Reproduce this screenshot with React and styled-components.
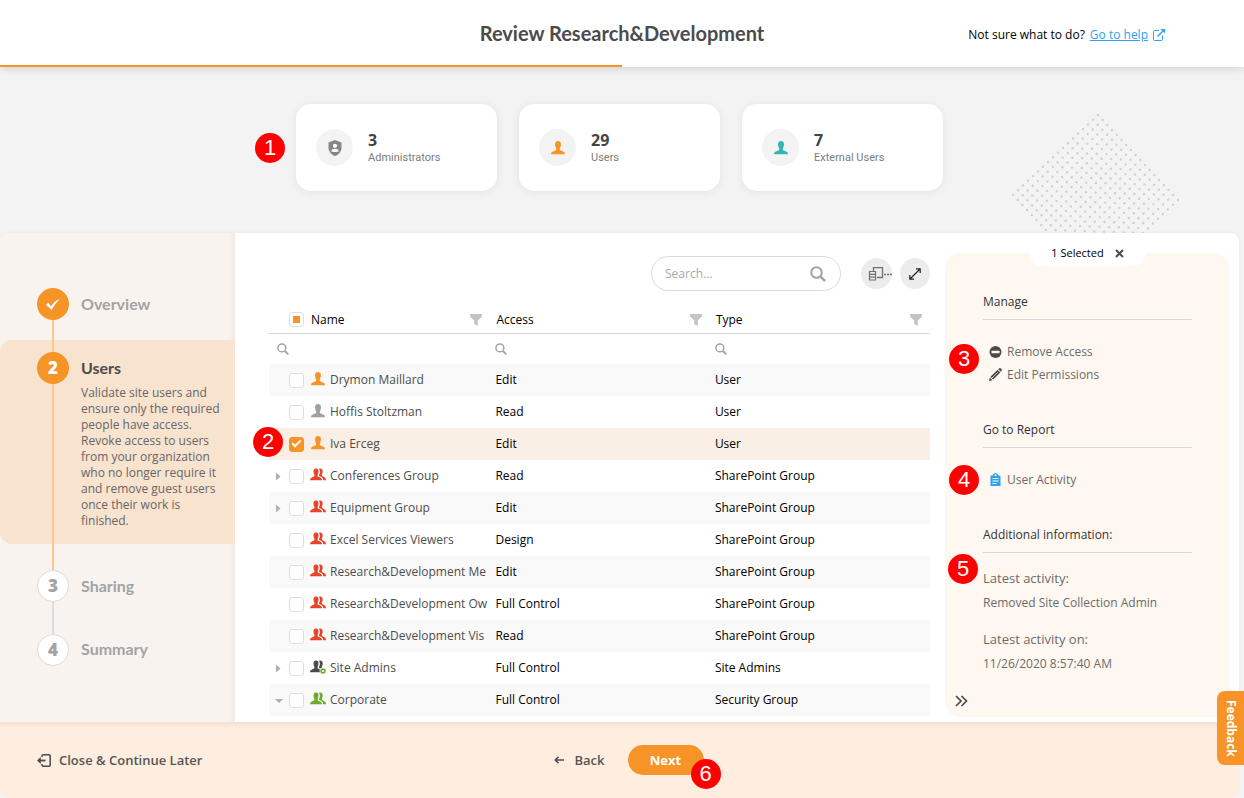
import React, { useState, useRef, useEffect } from "react";
import styled, { createGlobalStyle, css } from "styled-components";

const GlobalStyle = createGlobalStyle`
  *, *::before, *::after { box-sizing: border-box; }
  html, body { margin: 0; padding: 0; }
  body {
    background: #f3f3f3;
    color: #1c1c1c;
    font: 12px/16px "Open Sans", "Noto Sans", sans-serif;
  }
  button, input { font: inherit; color: inherit; }
  button { background: none; border: 0; padding: 0; cursor: pointer; }
  svg { display: block; flex: none; }
`;

const orange = "#f79428";
const heading = `Lato, "Open Sans", sans-serif`;

const Page = styled.div`
  min-height: 100vh;
  display: flex;
  flex-direction: column;
`;

/* Header */

const Header = styled.header`
  position: relative;
  z-index: 2;
  background: #fff;
  box-shadow: 0 2px 8px rgba(0, 0, 0, 0.13);
`;

const HeaderRow = styled.div`
  display: grid;
  grid-template-columns: 1fr auto 1fr;
  align-items: center;
  height: 65px;
`;

const Title = styled.h1`
  grid-column: 2;
  margin: 0;
  font: 700 20px/24px ${heading};
  color: #4b4b4b;
`;

const Help = styled.p`
  display: flex;
  align-items: center;
  justify-content: flex-end;
  gap: 5px;
  margin: 4px 79px 0 0;
  font-weight: 500;
  color: #000;
`;

const HelpLink = styled.a`
  display: flex;
  align-items: center;
  gap: 5px;
  color: #2ea3f2;
  text-decoration: underline;
`;

const ProgressTrack = styled.div`
  height: 2px;
`;

const ProgressFill = styled.div`
  width: 50%;
  height: 100%;
  background: ${orange};
`;

/* Numbered callouts laid over the screen */

const Callout = styled.span`
  position: absolute;
  z-index: 3;
  left: ${(p) => p.$x}px;
  top: ${(p) => p.$y}px;
  width: 30px;
  height: 30px;
  border-radius: 50%;
  background: #f00;
  color: #fff;
  font: 22px/30px "Liberation Sans", Arial, sans-serif;
  text-align: center;
`;

/* Summary cards */

const Content = styled.div`
  flex: 1;
  display: flex;
  flex-direction: column;
  margin-right: 5px;
`;

const Hero = styled.section`
  position: relative;
  display: flex;
  justify-content: center;
  padding: 37px 0 42px;
  overflow: hidden;
`;

const Dots = styled.svg`
  position: absolute;
  right: 59px;
  top: 45px;
`;

const Cards = styled.div`
  position: relative;
  display: flex;
  gap: 22px;
`;

const Card = styled.article`
  display: flex;
  align-items: center;
  gap: 15px;
  width: 201px;
  height: 87px;
  padding: 0 20px;
  border-radius: 15px;
  background: #fff;
  box-shadow: 0 1px 8px rgba(0, 0, 0, 0.07);
`;

const CardIcon = styled.div`
  display: grid;
  place-items: center;
  width: 37px;
  height: 37px;
  border-radius: 50%;
  background: #f3f3f3;
`;

const CardText = styled.div`
  padding-top: 2px;
`;

const CardCount = styled.div`
  font: 700 16px/18px "Open Sans", sans-serif;
  color: #444;
`;

const CardLabel = styled.div`
  font: 11px/18px Roboto, "Open Sans", sans-serif;
  color: #7c7c7c;
`;

/* Workspace */

const Workspace = styled.main`
  display: flex;
  border-radius: 8px 8px 0 0;
  background: #fff;
  box-shadow: 0 0 4px rgba(0, 0, 0, 0.05);
`;

const Sidebar = styled.nav`
  width: 235px;
  padding-top: 55px;
  border-radius: 8px 0 0 0;
  background: #f8f3ef;
  box-shadow: inset -8px 0 8px -8px rgba(0, 0, 0, 0.08);
`;

const StepItem = styled.div`
  display: flex;
  padding-left: 37px;
  border-radius: 12px 0 0 12px;
  background: ${(p) => (p.$active ? "#f8e3cf" : "transparent")};
`;

const Rail = styled.div`
  display: flex;
  flex-direction: column;
  align-items: center;
  width: 32px;
`;

const RailLine = styled.div`
  width: 2px;
  height: ${(p) => p.$h || 0}px;
  flex-grow: ${(p) => (p.$grow ? 1 : 0)};
  background: ${(p) => (p.$done ? "#fcc78c" : "#dcdcdc")};
`;

const StepMark = styled.div`
  display: grid;
  place-items: center;
  width: 32px;
  height: 32px;
  border-radius: 50%;
  font: 800 17px/18px "Open Sans", sans-serif;
  ${(p) =>
    p.$done
      ? css`
          background: ${orange};
          color: #fff;
        `
      : css`
          background: #fff;
          border: 1px solid #dcdcdc;
          color: #a3a3a3;
        `}
`;

const StepBody = styled.div`
  flex: 1;
  margin: ${(p) => p.$top}px 12px ${(p) => p.$bottom}px 12px;
`;

const StepTitle = styled.a`
  display: block;
  font: 700 16px/20px ${heading};
  color: ${(p) => (p.$active ? "#4b4b4b" : "#a3a3a3")};
  text-decoration: none;
`;

const StepText = styled.p`
  margin: 7px 0 0;
  color: #666;
`;

/* User grid */

const GridArea = styled.section`
  flex: 1;
  min-width: 0;
  padding: 23px 15px 6px 34px;
`;

const Toolbar = styled.div`
  display: flex;
  align-items: center;
  justify-content: flex-end;
  height: 35px;
  margin-bottom: 15px;
`;

const SearchBox = styled.label`
  display: flex;
  align-items: center;
  width: 190px;
  height: 35px;
  margin-right: 20px;
  padding: 0 14px 0 13px;
  border: 1px solid #dadada;
  border-radius: 18px;
  color: #a8a8a8;
`;

const SearchInput = styled.input`
  flex: 1;
  min-width: 0;
  border: 0;
  padding: 0;
  outline: 0;
  background: none;
  color: #333;
  &::placeholder {
    color: #a8a8a8;
    opacity: 1;
  }
`;

const RoundButton = styled.button`
  display: flex;
  align-items: center;
  justify-content: ${(p) => (p.$wide ? "flex-end" : "center")};
  width: ${(p) => (p.$wide ? 31 : 30)}px;
  height: 31px;
  margin-left: ${(p) => p.$gap || 0}px;
  border-radius: 50%;
  background: #ececec;
`;

const Table = styled.table`
  width: 100%;
  table-layout: fixed;
  border-collapse: separate;
  border-spacing: 0;
`;

const HeadCell = styled.th`
  height: 28px;
  padding: 0;
  border-bottom: 1px solid #d4d4d4;
  font-weight: 400;
  text-align: left;
  color: #000;
`;

const HeadInner = styled.div`
  display: flex;
  align-items: center;
  padding: 0 ${(p) => p.$right}px 0 ${(p) => p.$left}px;
  gap: 7px;
`;

const FilterButton = styled.button`
  margin-left: auto;
`;

const FilterCell = styled.td`
  height: 30px;
  padding: 0 0 0 ${(p) => p.$left}px;
`;

const Row = styled.tr`
  background: ${(p) => (p.$selected ? "#faefe4" : p.$striped ? "#f9f9f9" : "#fff")};
`;

const Cell = styled.td`
  position: relative;
  height: 32px;
  padding: 0 0 0 ${(p) => p.$left || 0}px;
  color: #000;
`;

const NameInner = styled.div`
  display: flex;
  align-items: center;
  padding-left: 6px;
  white-space: nowrap;
  color: #4d4d4d;
`;

const Caret = styled.button`
  width: 14px;
  height: 15px;
`;

const CaretSpace = styled.span`
  flex: none;
  width: 14px;
`;

const CheckBox = styled.input`
  appearance: none;
  flex: none;
  display: grid;
  place-items: center;
  width: 15px;
  height: 15px;
  margin: 0;
  border: 1px solid #dedede;
  border-radius: 3px;
  background: #fff;
  &:checked {
    border-color: ${orange};
    background: ${orange};
  }
  &:checked::after {
    content: "";
    width: 9px;
    height: 5px;
    margin-top: -3px;
    border: solid #fff;
    border-width: 0 0 2px 2px;
    transform: rotate(-45deg);
  }
  &:indeterminate::after {
    content: "";
    width: 7px;
    height: 7px;
    background: ${orange};
  }
`;

const KindIcon = styled.span`
  flex: none;
  width: 16px;
  margin: 0 4px 2px 6px;
`;

/* Side panel */

const Panel = styled.aside`
  position: relative;
  display: flex;
  flex-direction: column;
  width: 285px;
  margin: 20px 9px 5px 0;
  border-radius: 15px;
  background: #fff8f1;
`;

const PanelTab = styled.div`
  display: flex;
  align-items: center;
  align-self: center;
  gap: 11px;
  height: 26px;
  margin-top: -13px;
  padding: 0 22px;
  border-radius: 0 0 14px 14px;
  background: #fff;
  font-size: 11px;
  color: #000;
`;

const PanelSection = styled.section`
  margin: ${(p) => p.$top}px 38px 0;
`;

const PanelTitle = styled.h2`
  margin: 0 0 ${(p) => p.$gap}px;
  padding-bottom: 7px;
  border-bottom: 1px solid #d8d8d8;
  font: 500 12px/20px "Open Sans", sans-serif;
  color: #333;
`;

const ActionButton = styled.button`
  display: flex;
  align-items: center;
  gap: 5px;
  height: 23px;
  padding-left: 6px;
  color: #6b6b6b;
`;

const Facts = styled.dl`
  margin: 0;
  color: #6b6b6b;
`;

const FactTerm = styled.dt`
  margin-top: ${(p) => p.$top || 0}px;
  font-size: 13px;
`;

const FactValue = styled.dd`
  margin: 9px 0 0;
`;

const CollapseButton = styled.button`
  align-self: flex-start;
  margin: auto 0 10px 10px;
  color: #4b4b4b;
`;

/* Footer */

const Footer = styled.footer`
  position: relative;
  flex: 1;
  display: grid;
  grid-template-columns: 1fr auto 1fr;
  align-items: center;
  min-height: 76px;
  border-radius: 0 0 8px 8px;
  background: #ffeedf;
  box-shadow: inset 0 7px 7px -6px rgba(120, 70, 20, 0.14);
`;

const TextButton = styled.button`
  display: flex;
  align-items: center;
  justify-self: start;
  gap: ${(p) => p.$gap}px;
  padding: 0 ${(p) => p.$pad}px;
  font-size: 13px;
  font-weight: 600;
  color: #555;
`;

const FooterActions = styled.div`
  display: flex;
  align-items: center;
  gap: 4px;
`;

const NextButton = styled.button`
  position: relative;
  width: 76px;
  height: 30px;
  border-radius: 15px;
  background: ${orange};
  color: #fff;
  font-size: 13px;
  font-weight: 700;
`;

const Feedback = styled.button`
  position: fixed;
  z-index: 4;
  right: 0;
  bottom: 33px;
  width: 27px;
  height: 74px;
  border-radius: 8px 0 0 8px;
  background: ${orange};
  color: #fff;
  font-weight: 700;
  writing-mode: vertical-rl;
`;

/* Icons */

const UserIcon = ({ color }) => (
  <svg width="16" height="14" viewBox="0 0 16 14" fill={color}>
    <path d="M8 0C6 0 5 1.500 5 3.500C5 5.500 6 6.800 6.200 7.600V8.600C6.200 9.600 5 9.800 3.500 10.200C1.800 10.700 1 11.600 1 13.300H15C15 11.600 14.200 10.700 12.500 10.200C11 9.800 9.800 9.600 9.800 8.600V7.600C10 6.800 11 5.500 11 3.500C11 1.500 10 0 8 0Z" />
  </svg>
);

const GroupIcon = ({ color, gear }) => (
  <svg width="16" height="14" viewBox="0 0 16 14">
    <path
      fill={color}
      d="M6 .5C4.200.5 3.500 1.700 3.500 3.400C3.500 5 4.200 6 4.400 6.700V7.600C4.400 8.700 3.300 8.900 2 9.400C.6 9.900 0 10.500 0 12.200H12C12 10.500 11.400 9.900 10 9.400C8.700 8.900 7.600 8.700 7.600 7.600V6.700C7.800 6 8.500 5 8.500 3.400C8.500 1.700 7.800.5 6 .5Z"
    />
    <path
      fill={color}
      d="M9 .7C11.300.2 12.700 1.300 12.700 3.500C12.700 5 12.200 5.900 11.900 6.600V7.600C12.600 8.800 14 8.700 15 9.700C15.800 10.400 16 11 16 12.200H13.200C13 9.700 11.500 8.900 9.600 8.300C8.900 8 8.900 7.200 9.200 6.500C10.200 4.800 10.200 2.400 9 .7Z"
    />
    {gear && (
      <>
        <circle cx="13" cy="11" r="3.400" fill="#fff" />
        <circle cx="13" cy="11" r="1.900" fill="none" stroke="#6aab2e" strokeWidth="1.600" />
      </>
    )}
  </svg>
);

const SearchIcon = ({ size }) => (
  <svg width={size} height={size} viewBox="0 0 14 14" fill="none" stroke="#a5a5a5" strokeWidth="1.800">
    <circle cx="5.700" cy="5.700" r="4.600" />
    <path d="M9 9L13.200 13.200" strokeWidth="2.200" />
  </svg>
);

const FunnelIcon = () => (
  <svg width="12" height="12" viewBox="0 0 12 12" fill="#c4c4c4">
    <path d="M0 0H12V2.500L7.800 6.500V12L4.200 10V6.500L0 2.500Z" />
  </svg>
);

const ShieldIcon = () => (
  <svg width="14" height="16" viewBox="0 0 14 16">
    <path fill="#868686" d="M7 0L13.500 2.500V7.500C13.500 11.500 10.800 14.700 7 16C3.200 14.700.5 11.500.5 7.500V2.500Z" />
    <circle cx="7" cy="5.800" r="2.100" fill="#fff" />
    <path fill="#fff" d="M3.200 11.300C3.400 9.400 5.200 8.700 7 8.700S10.600 9.400 10.800 11.300C9.800 12.300 4.200 12.300 3.200 11.300Z" />
  </svg>
);

const ExternalIcon = () => (
  <svg width="12" height="12" viewBox="0 0 12 12" fill="none" stroke="#2ea3f2">
    <path d="M6 1.500H1.500C.9 1.500.5 1.900.5 2.500V10.500C.5 11.100.9 11.500 1.500 11.500H8.500C9.100 11.500 9.500 11.100 9.500 10.500V6.500" />
    <path d="M4.500 7.500L10.500 1.500" strokeWidth="1.500" />
    <path d="M7.500 0H12V4.500Z" fill="#2ea3f2" stroke="none" />
  </svg>
);

const CheckIcon = () => (
  <svg width="16" height="13" viewBox="0 0 16 13" fill="#fff">
    <path d="M1 6.800L3.200 4.800L6 8.200C8 5.200 10.800 2.500 14.800.8C12.200 3.800 9 7.600 6.600 12Z" />
  </svg>
);

const ColumnsIcon = () => (
  <svg width="24" height="14" viewBox="0 0 24 14" fill="none" stroke="#707070">
    <path d="M5.500 4V.5H14.500V10.500H9" strokeWidth="1.300" />
    <path d="M1.500 4.500H7.500V13H1.500ZM1.500 7.300H7.500M1.500 10.200H7.500" strokeWidth="1.200" />
    <path d="M16 7.500H18M19 7.500H21M22 7.500H24" strokeWidth="1.400" />
  </svg>
);

const ExpandIcon = () => (
  <svg width="12" height="12" viewBox="0 0 12 12" fill="none" stroke="#222" strokeWidth="1.200">
    <path d="M1 11L11 1M7 .8H11.200V5M.8 7V11.200H5" />
  </svg>
);

const CloseIcon = () => (
  <svg width="9" height="9" viewBox="0 0 9 9" stroke="#4b4b4b" strokeWidth="2">
    <path d="M1 1L8 8M8 1L1 8" />
  </svg>
);

const RemoveIcon = () => (
  <svg width="13" height="12" viewBox="0 0 13 12">
    <circle cx="6.500" cy="6" r="6" fill="#4b4b4b" />
    <rect x="2.500" y="4.700" width="8" height="2.600" rx=".5" fill="#fff8f1" />
  </svg>
);

const PencilIcon = () => (
  <svg width="13" height="13" viewBox="0 0 13 13">
    <path d="M0 13L.8 9.500L3.500 12.200ZM1.400 8.800L8.600 1.700L11.300 4.400L4.200 11.600ZM9.300 1.200L10.100.4C10.600-.1 11.400 0 12 .6L12.500 1.100C13 1.700 13 2.400 12.600 2.900L11.900 3.700Z" fill="#4b4b4b" />
    <path d="M3 10L9 4" stroke="#fff8f1" strokeWidth=".7" />
  </svg>
);

const ClipboardIcon = () => (
  <svg width="13" height="13" viewBox="0 0 13 13">
    <path d="M1.500 2.500H3.800C4 1 5 0 6.500 0S9 1 9.200 2.500H11.500V13H1.500Z" fill="#2ea3f2" />
    <circle cx="6.500" cy="2.200" r="1" fill="#fff8f1" />
    <path d="M3.500 5.500H9.500M3.500 8H9.500M3.500 10.500H7.500" stroke="#fff8f1" />
  </svg>
);

const ChevronsIcon = () => (
  <svg width="13" height="12" viewBox="0 0 13 12" fill="none" stroke="currentColor" strokeWidth="1.700">
    <path d="M1 1L6 6L1 11M6.500 1L11.500 6L6.500 11" />
  </svg>
);

const ExitIcon = () => (
  <svg width="14" height="13" viewBox="0 0 14 13" fill="none" stroke="#4b4b4b" strokeWidth="1.500">
    <path d="M5 3V2C5 1.200 5.400.8 6.200.8H12C12.800.8 13.200 1.200 13.200 2V11C13.200 11.800 12.800 12.200 12 12.200H6.200C5.400 12.200 5 11.800 5 11V10" />
    <path d="M8.500 6.500H2" strokeWidth="1.800" />
    <path d="M0 6.500L3.800 3V10Z" fill="#4b4b4b" stroke="none" />
  </svg>
);

const BackIcon = () => (
  <svg width="10" height="8" viewBox="0 0 10 8" fill="none" stroke="#4b4b4b" strokeWidth="1.600">
    <path d="M10 4H1.500M4.500.8L1.300 4L4.500 7.200" />
  </svg>
);

const CaretIcon = ({ open }) => (
  <svg width="8" height="15" viewBox="0 0 8 15" fill="#b0b0b0">
    <path d={open ? "M0 6H8L4 10Z" : "M1 3.500L5.500 7.500L1 11.500Z"} />
  </svg>
);

const DotPattern = () => {
  const dots = [];
  for (let i = 0; i < 18; i++) {
    for (let j = 0; j < 18; j++) {
      dots.push(<circle key={`${i}-${j}`} cx={88 + i * 4.7 - j * 5} cy={3 + i * 5 + j * 4.7} r="1.200" />);
    }
  }
  return (
    <Dots width="170" height="122" viewBox="0 0 170 122" fill="#d0d0d0" aria-hidden="true">
      {dots}
    </Dots>
  );
};

/* Data */

const red = "#e8442a";
const stats = [
  { count: 3, label: "Administrators", icon: <ShieldIcon /> },
  { count: 29, label: "Users", icon: <UserIcon color={orange} /> },
  { count: 7, label: "External Users", icon: <UserIcon color="#38b2b2" /> },
];

const people = [
  { name: "Drymon Maillard", access: "Edit", type: "User", kind: "user", color: orange },
  { name: "Hoffis Stoltzman", access: "Read", type: "User", kind: "user", color: "#a0a0a0" },
  { name: "Iva Erceg", access: "Edit", type: "User", kind: "user", color: orange, callout: 2 },
  { name: "Conferences Group", access: "Read", type: "SharePoint Group", color: red, caret: "closed" },
  { name: "Equipment Group", access: "Edit", type: "SharePoint Group", color: red, caret: "closed" },
  { name: "Excel Services Viewers", access: "Design", type: "SharePoint Group", color: red },
  { name: "Research&Development Me", access: "Edit", type: "SharePoint Group", color: red },
  { name: "Research&Development Ow", access: "Full Control", type: "SharePoint Group", color: red },
  { name: "Research&Development Vis", access: "Read", type: "SharePoint Group", color: red },
  { name: "Site Admins", access: "Full Control", type: "Site Admins", color: "#4b4b4b", gear: true, caret: "closed" },
  { name: "Corporate", access: "Full Control", type: "Security Group", color: "#6aab2e", caret: "open" },
];

const Step = ({ mark, title, text, active, done, lineDone, above, below, grow, top, bottom = 0 }) => (
  <StepItem $active={active}>
    <Rail>
      <RailLine $h={above} $done={done || lineDone} />
      <StepMark $done={done}>{mark}</StepMark>
      <RailLine $h={below} $grow={grow} $done={done} />
    </Rail>
    <StepBody $top={top} $bottom={bottom}>
      <StepTitle href="#" $active={active}>{title}</StepTitle>
      {text && <StepText>{text}</StepText>}
    </StepBody>
  </StepItem>
);

const PersonRow = ({ person, index, checked, onToggle }) => (
  <Row $striped={index % 2 === 0} $selected={checked}>
    <Cell>
      {person.callout && <Callout $x={-16} $y={-1}>{person.callout}</Callout>}
      <NameInner>
        {person.caret ? (
          <Caret aria-label={`Expand ${person.name}`}>
            <CaretIcon open={person.caret === "open"} />
          </Caret>
        ) : (
          <CaretSpace />
        )}
        <CheckBox type="checkbox" aria-label={person.name} checked={checked} onChange={onToggle} />
        <KindIcon>
          {person.kind === "user" ? (
            <UserIcon color={person.color} />
          ) : (
            <GroupIcon color={person.color} gear={person.gear} />
          )}
        </KindIcon>
        {person.name}
      </NameInner>
    </Cell>
    <Cell $left={7}>{person.access}</Cell>
    <Cell $left={7}>{person.type}</Cell>
  </Row>
);

export default function App() {
  const [selected, setSelected] = useState([2]);
  const allRef = useRef(null);

  useEffect(() => {
    allRef.current.indeterminate = selected.length > 0 && selected.length < people.length;
  }, [selected]);

  const toggle = (i) =>
    setSelected((list) => (list.includes(i) ? list.filter((n) => n !== i) : [...list, i]));

  return (
    <Page>
      <GlobalStyle />
      <Header>
        <HeaderRow>
          <Title>Review Research&amp;Development</Title>
          <Help>
            Not sure what to do?
            <HelpLink href="#">
              Go to help <ExternalIcon />
            </HelpLink>
          </Help>
        </HeaderRow>
        <ProgressTrack>
          <ProgressFill />
        </ProgressTrack>
      </Header>

      <Content>
        <Hero>
          <DotPattern />
          <Cards>
            <Callout $x={-41} $y={29}>1</Callout>
            {stats.map((s) => (
              <Card key={s.label}>
                <CardIcon>{s.icon}</CardIcon>
                <CardText>
                  <CardCount>{s.count}</CardCount>
                  <CardLabel>{s.label}</CardLabel>
                </CardText>
              </Card>
            ))}
          </Cards>
        </Hero>

        <Workspace>
          <Sidebar aria-label="Review steps">
            <Step mark={<CheckIcon />} title="Overview" done below={20} top={6} />
            <Step
              mark="2"
              title="Users"
              text="Validate site users and ensure only the required people have access. Revoke access to users from your organization who no longer require it and remove guest users once their work is finished."
              active
              done
              above={12}
              grow
              top={18}
              bottom={15}
            />
            <Step mark="3" title="Sharing" lineDone above={26} below={16} top={32} />
            <Step mark="4" title="Summary" above={16} top={21} />
          </Sidebar>

          <GridArea>
            <Toolbar>
              <SearchBox>
                <SearchInput type="text" placeholder="Search..." aria-label="Search" />
                <SearchIcon size={16} />
              </SearchBox>
              <RoundButton $wide aria-label="Choose columns">
                <ColumnsIcon />
              </RoundButton>
              <RoundButton $gap={8} aria-label="Full screen">
                <ExpandIcon />
              </RoundButton>
            </Toolbar>
            <Table>
              <colgroup>
                <col style={{ width: "33.2%" }} />
                <col style={{ width: "33.2%" }} />
                <col />
              </colgroup>
              <thead>
                <tr>
                  <HeadCell>
                    <HeadInner $left={20} $right={6}>
                      <CheckBox ref={allRef} type="checkbox" aria-label="Select all" onChange={() => setSelected([])} checked={selected.length === people.length} />
                      Name
                      <FilterButton aria-label="Filter name"><FunnelIcon /></FilterButton>
                    </HeadInner>
                  </HeadCell>
                  <HeadCell>
                    <HeadInner $left={8} $right={6}>
                      Access
                      <FilterButton aria-label="Filter access"><FunnelIcon /></FilterButton>
                    </HeadInner>
                  </HeadCell>
                  <HeadCell>
                    <HeadInner $left={8} $right={8}>
                      Type
                      <FilterButton aria-label="Filter type"><FunnelIcon /></FilterButton>
                    </HeadInner>
                  </HeadCell>
                </tr>
              </thead>
              <tbody>
                <tr>
                  <FilterCell $left={8}><SearchIcon size={12} /></FilterCell>
                  <FilterCell $left={7}><SearchIcon size={12} /></FilterCell>
                  <FilterCell $left={7}><SearchIcon size={12} /></FilterCell>
                </tr>
                {people.map((person, i) => (
                  <PersonRow
                    key={person.name}
                    person={person}
                    index={i}
                    checked={selected.includes(i)}
                    onToggle={() => toggle(i)}
                  />
                ))}
              </tbody>
            </Table>
          </GridArea>

          <Panel>
            <Callout $x={4} $y={91}>3</Callout>
            <Callout $x={4} $y={212}>4</Callout>
            <Callout $x={3} $y={301}>5</Callout>
            <PanelTab>
              {selected.length} Selected
              <button aria-label="Clear selection" onClick={() => setSelected([])}>
                <CloseIcon />
              </button>
            </PanelTab>
            <PanelSection $top={26}>
              <PanelTitle $gap={20}>Manage</PanelTitle>
              <ActionButton><RemoveIcon />Remove Access</ActionButton>
              <ActionButton><PencilIcon />Edit Permissions</ActionButton>
            </PanelSection>
            <PanelSection $top={34}>
              <PanelTitle $gap={20}>Go to Report</PanelTitle>
              <ActionButton><ClipboardIcon />User Activity</ActionButton>
            </PanelSection>
            <PanelSection $top={34}>
              <PanelTitle $gap={17}>Additional information:</PanelTitle>
              <Facts>
                <FactTerm>Latest activity:</FactTerm>
                <FactValue>Removed Site Collection Admin</FactValue>
                <FactTerm $top={20}>Latest activity on:</FactTerm>
                <FactValue>11/26/2020 8:57:40 AM</FactValue>
              </Facts>
            </PanelSection>
            <CollapseButton aria-label="Collapse panel"><ChevronsIcon /></CollapseButton>
          </Panel>
        </Workspace>

        <Footer>
          <TextButton $gap={8} $pad={37}><ExitIcon />Close &amp; Continue Later</TextButton>
          <FooterActions>
            <TextButton $gap={10} $pad={19}><BackIcon />Back</TextButton>
            <NextButton>
              Next
              <Callout $x={63} $y={14}>6</Callout>
            </NextButton>
          </FooterActions>
        </Footer>
      </Content>
      <Feedback>Feedback</Feedback>
    </Page>
  );
}
